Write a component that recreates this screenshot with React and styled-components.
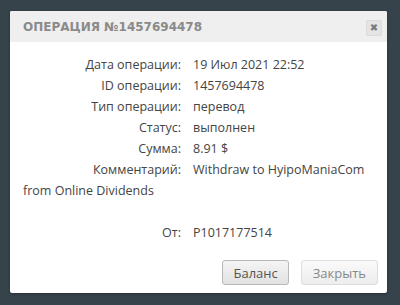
import styled, { createGlobalStyle } from "styled-components";

const Global = createGlobalStyle`
  html, body {
    margin: 0;
    padding: 0;
    background: #36434b;
    width: 400px;
    height: 305px;
    overflow: hidden;
  }
`;

const Page = styled.div`
  padding: 11px 13px 12px 10px;
  font-family: "Open Sans", "DejaVu Sans", sans-serif;
`;

const Dialog = styled.div`
  background: #fff;
  border-radius: 2px;
  box-shadow: 0 1px 3px rgba(0,0,0,0.3);
`;

const Header = styled.div`
  display: flex;
  align-items: center;
  justify-content: space-between;
  height: 31px;
  padding: 0 5px 0 13px;
  background: #efefef;
  border-radius: 2px 2px 0 0;
`;

const Title = styled.h3`
  margin: 0;
  font-family: "DejaVu Sans", sans-serif;
  font-size: 12px;
  font-weight: bold;
  letter-spacing: 0;
  text-transform: uppercase;
  color: #8a8a8a;
`;

const CloseButton = styled.button`
  width: 16px;
  height: 16px;
  padding: 0;
  margin-top: 2px;
  border: 1px solid #dcdcdc;
  border-radius: 2px;
  background: #e4e4e4;
  color: #7a7a7a;
  font-family: "DejaVu Sans", sans-serif;
  font-size: 10px;
  font-weight: bold;
  line-height: 14px;
`;

const Body = styled.div`
  padding: 12px 13px 0 13px;
  font-size: 12.5px;
  line-height: 21px;
  color: #444;
`;

const Row = styled.div``;

const Label = styled.span`
  display: inline-block;
  width: 158px;
  margin-right: 12px;
  text-align: right;
`;

const Spacer = styled.div`
  height: 21px;
`;

const Footer = styled.div`
  display: flex;
  justify-content: flex-end;
  gap: 12px;
  padding: 17px 9px 8px 0;
`;

const Button = styled.button`
  height: 25px;
  padding: 0 ${(p) => (p.$primary ? "10px" : "11px")};
  font-family: "Open Sans", "DejaVu Sans", sans-serif;
  font-size: 13px;
  color: ${(p) => (p.$primary ? "#555" : "#888")};
  background: ${(p) =>
    p.$primary
      ? "linear-gradient(#f4f4f4, #e2e2e2)"
      : "linear-gradient(#fafafa, #ededed)"};
  border: 1px solid ${(p) => (p.$primary ? "#b8b8b8" : "#dddddd")};
  border-radius: 3px;
`;

const rows = [
  ["Дата операции:", "19 Июл 2021 22:52"],
  ["ID операции:", "1457694478"],
  ["Тип операции:", "перевод"],
  ["Статус:", "выполнен"],
  ["Сумма:", "8.91 $"],
  ["Комментарий:", "Withdraw to HyipoManiaCom from Online Dividends"],
];

export default function App() {
  return (
    <Page>
      <Global />
      <Dialog>
        <Header>
          <Title>Операция №1457694478</Title>
          <CloseButton>✖</CloseButton>
        </Header>
        <Body>
          {rows.map(([label, value]) => (
            <Row key={label}>
              <Label>{label}</Label>
              {value}
            </Row>
          ))}
          <Spacer />
          <Row>
            <Label>От:</Label>
            P1017177514
          </Row>
        </Body>
        <Footer>
          <Button $primary>Баланс</Button>
          <Button>Закрыть</Button>
        </Footer>
      </Dialog>
    </Page>
  );
}
